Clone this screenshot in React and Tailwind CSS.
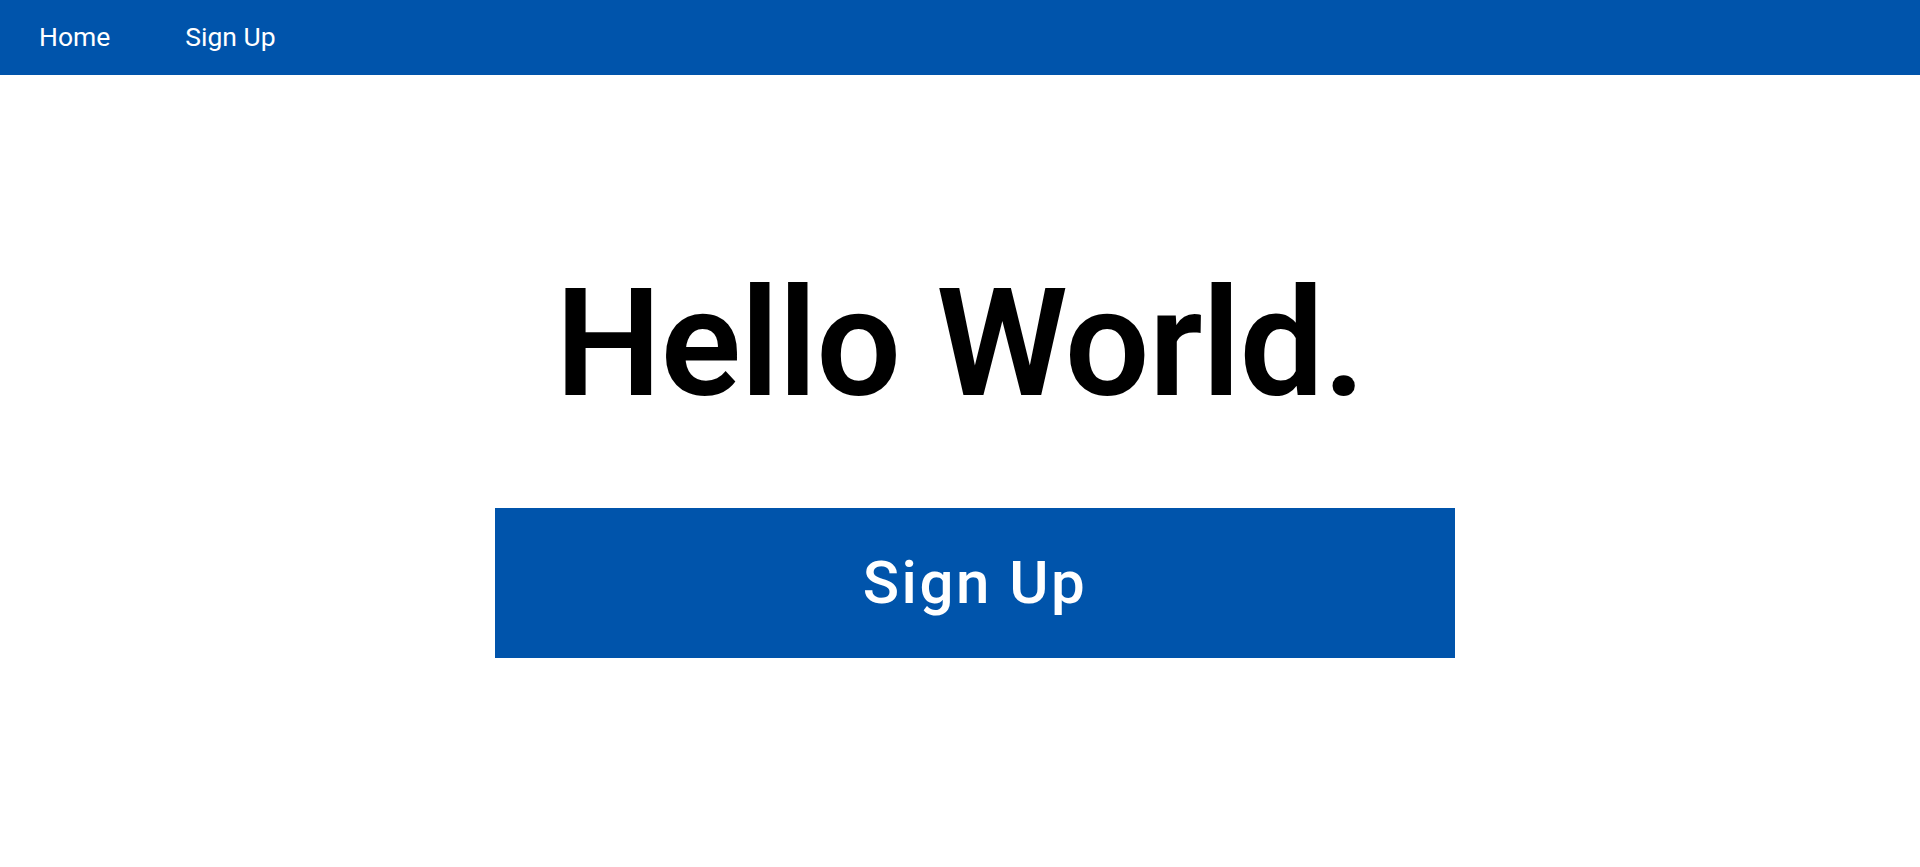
export default function App() {
  return (
    <div className="min-h-screen bg-white" style={{ fontFamily: "Roboto, 'Noto Sans', sans-serif" }}>
      <nav className="h-[75px] bg-[#0054ab] flex items-center">
        <a className="ml-[39px] text-white text-[26.5px] leading-none">Home</a>
        <a className="ml-[75px] text-white text-[26.5px] leading-none">Sign Up</a>
      </nav>
      <main className="flex flex-col items-center">
        <h1 className="mt-[194px] text-[150px] leading-none font-semibold text-black tracking-[-1px]">Hello World.</h1>
        <button className="mt-[89px] ml-[30px] w-[960px] h-[150px] bg-[#0054ab] text-white text-[60px] leading-none font-medium flex items-center justify-center tracking-[2.5px]">
          Sign Up
        </button>
      </main>
    </div>
  );
}
